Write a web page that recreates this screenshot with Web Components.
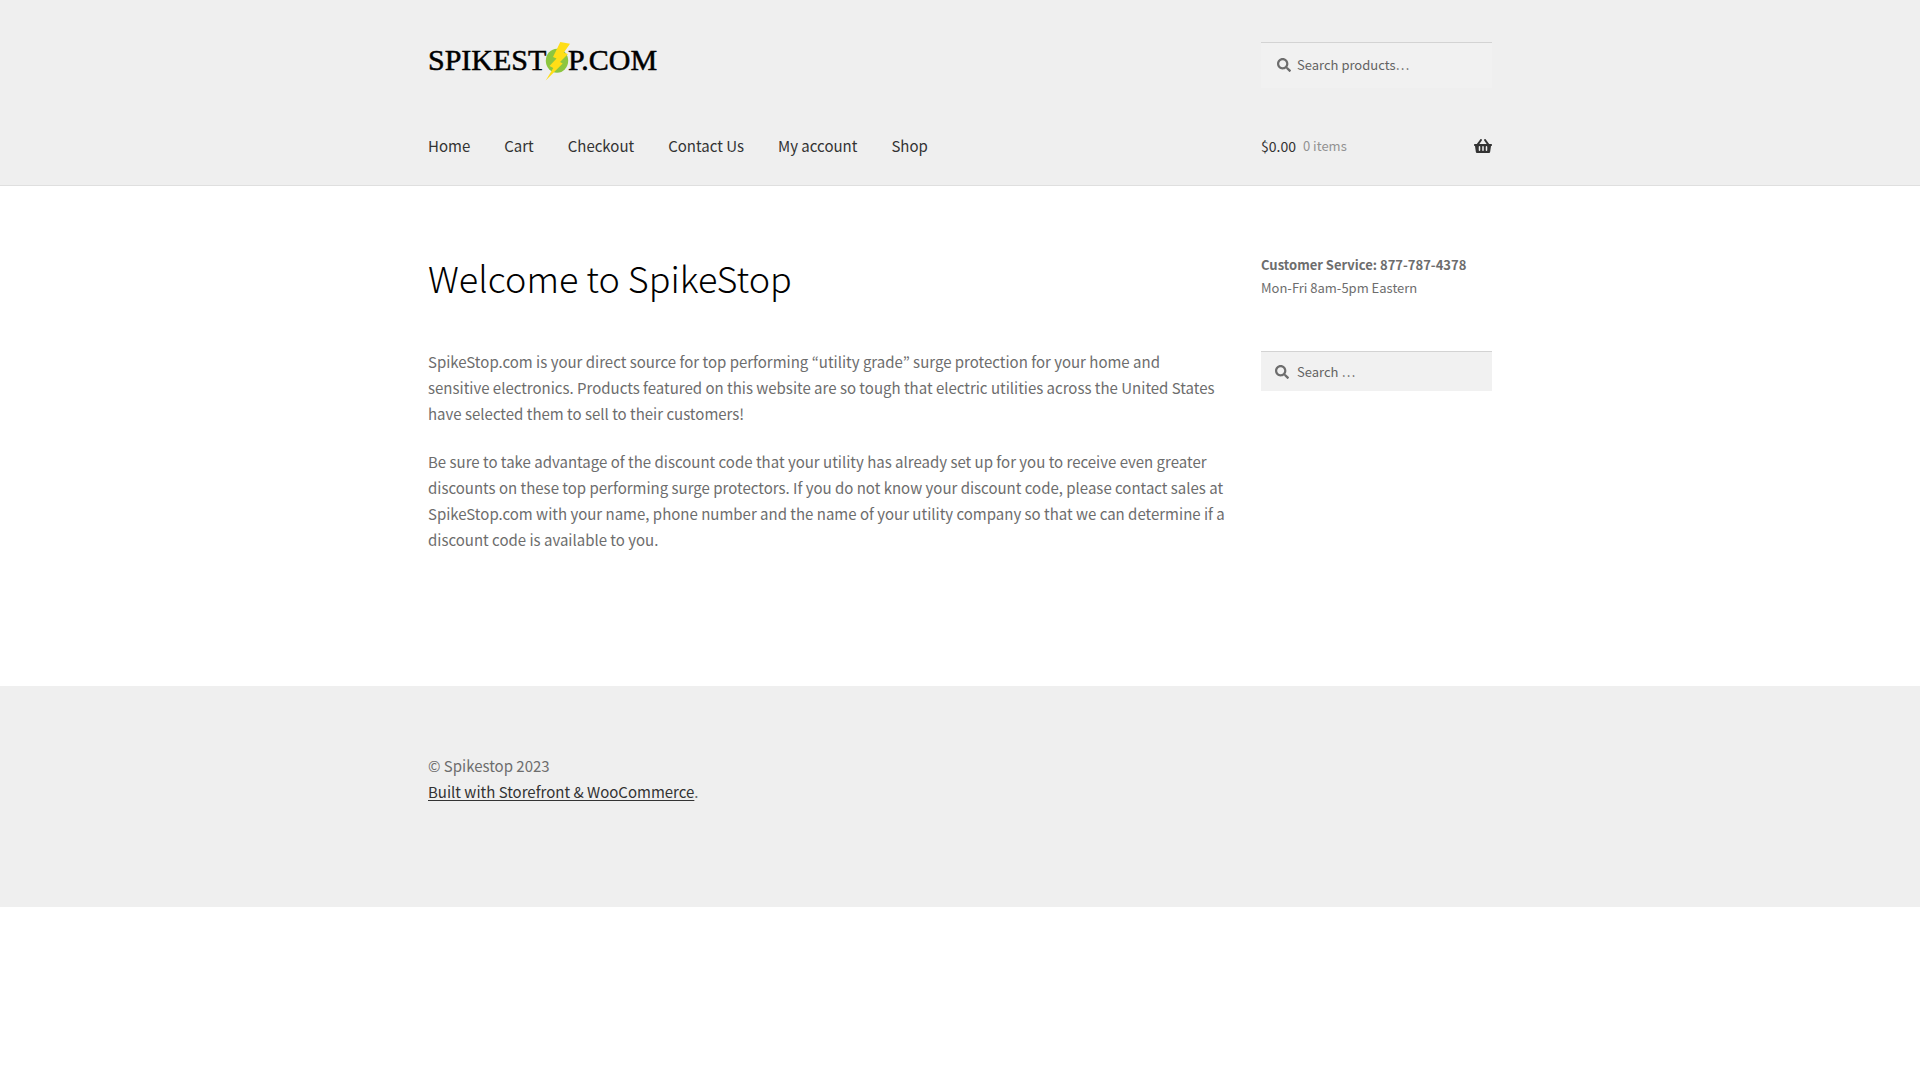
<!DOCTYPE html>
<html lang="en">
<head>
    <meta charset="UTF-8">
    <meta name="viewport" content="width=device-width, initial-scale=1.0">
    <title>SpikeStop</title>
    <style>
        body {
            margin: 0;
            background-color: #fff;
            color: #6d6d6d;
            font-family: "Noto Sans CJK KR", "Open Sans", sans-serif;
            font-size: 15px;
            line-height: 26px;
            --bar: #efefef;
            --dark: #333;
            --gutter: 32px;
            --side: 231px;
        }
        h1 {
            margin: 0 0 48px;
            color: #000;
            font-size: 36px;
            font-weight: 300;
            line-height: 48px;
        }
        p {
            margin: 0 0 22px;
        }
        .hours {
            margin: 0 0 52px;
            font-size: 13px;
            line-height: 23px;
        }
        .credit {
            margin: 0;
        }
        .credit a {
            color: #333;
            text-underline-offset: 2px;
        }
    </style>
</head>
<body>
    <site-header>
        <site-logo slot="logo"></site-logo>
        <search-box slot="search" label="Search products…" size="tall"></search-box>
        <site-nav slot="nav"></site-nav>
        <cart-summary slot="cart" amount="$0.00" count="0 items"></cart-summary>
    </site-header>

    <site-content>
        <h1>Welcome to SpikeStop</h1>
        <p>SpikeStop.com is your direct source for top performing “utility grade” surge protection for your home and<br> sensitive electronics. Products featured on this website are so tough that electric utilities across the United States have selected them to sell to their customers!</p>
        <p>Be sure to take advantage of the discount code that your utility has already set up for you to receive even greater discounts on these top performing surge protectors. If you do not know your discount code, please contact sales at SpikeStop.com with your name, phone number and the name of your utility company so that we can determine if a discount code is available to you.</p>
        <p class="hours" slot="side"><strong>Customer Service: 877-787-4378</strong><br>Mon-Fri 8am-5pm Eastern</p>
        <search-box slot="side" label="Search …"></search-box>
    </site-content>

    <site-footer>
        <p class="credit">© Spikestop 2023<br><a href="#">Built with Storefront &amp; WooCommerce</a>.</p>
    </site-footer>

    <script>
        class SiteHeader extends HTMLElement {
            constructor() {
                super();
                this.attachShadow({ mode: 'open' }).innerHTML = `
                    <style>
                        :host {
                            display: block;
                            padding-top: 42px;
                            background-color: var(--bar);
                            border-bottom: 1px solid #dfdfdf;
                        }
                        .inner {
                            display: grid;
                            grid-template-columns: 1fr var(--side);
                            column-gap: var(--gutter);
                            row-gap: 32px;
                            max-width: 1064px;
                            margin: 0 auto;
                        }
                    </style>
                    <header class="inner">
                        <slot name="logo"></slot>
                        <slot name="search"></slot>
                        <slot name="nav"></slot>
                        <slot name="cart"></slot>
                    </header>
                `;
            }
        }

        class SiteLogo extends HTMLElement {
            constructor() {
                super();
                this.attachShadow({ mode: 'open' }).innerHTML = `
                    <style>
                        :host {
                            display: block;
                        }
                        a {
                            display: block;
                            width: fit-content;
                        }
                        svg {
                            display: block;
                        }
                        text {
                            font: 30px "Liberation Serif", serif;
                            stroke: #000;
                            stroke-width: 0.5;
                        }
                    </style>
                    <a href="#" aria-label="SpikeStop.com">
                        <svg width="231" height="40" viewBox="0 0 231 40">
                            <ellipse cx="129" cy="18.700" rx="11.200" ry="12" fill="#8cc63f"/>
                            <text x="0" y="28">SPIKEST</text>
                            <text x="140" y="28">P.COM</text>
                            <path d="M132.300 0L142 1.700L135.700 10.700L140 12L132 20L134.700 21.500L117.700 38.500L125.300 26L121.500 24L128.500 16.500L125 15Z" fill="#ffde17"/>
                        </svg>
                    </a>
                `;
            }
        }

        class SiteNav extends HTMLElement {
            constructor() {
                super();
                this.attachShadow({ mode: 'open' });
                this.items = ['Home', 'Cart', 'Checkout', 'Contact Us', 'My account', 'Shop'];
            }

            connectedCallback() {
                this.shadowRoot.innerHTML = `
                    <style>
                        :host {
                            display: block;
                        }
                        nav {
                            display: flex;
                            gap: 34px;
                        }
                        a {
                            padding: 13px 0 26px;
                            color: var(--dark);
                            text-decoration: none;
                        }
                    </style>
                    <nav>${this.items.map(item => `<a href="#">${item}</a>`).join('')}</nav>
                `;
            }
        }

        class CartSummary extends HTMLElement {
            constructor() {
                super();
                this.attachShadow({ mode: 'open' });
            }

            connectedCallback() {
                this.shadowRoot.innerHTML = `
                    <style>
                        :host {
                            display: block;
                        }
                        a {
                            display: flex;
                            align-items: center;
                            gap: 7px;
                            padding: 13px 0 26px;
                            color: var(--dark);
                            text-decoration: none;
                        }
                        .amount {
                            font-size: 14px;
                        }
                        .count {
                            flex: 1;
                            color: #929292;
                            font-size: 13px;
                        }
                    </style>
                    <a href="#" title="View your shopping cart">
                        <span class="amount">${this.getAttribute('amount')}</span>
                        <span class="count">${this.getAttribute('count')}</span>
                        <svg width="18" height="16" viewBox="0 0 576 512" fill="currentColor" aria-hidden="true">
                            <path d="M576 216v16c0 13.255-10.745 24-24 24h-8l-26.113 182.788C514.509 462.435 494.257 480 470.370 480H105.630c-23.887 0-44.139-17.565-47.518-41.212L32 256h-8c-13.255 0-24-10.745-24-24v-16c0-13.255 10.745-24 24-24h67.341l106.780-146.821c10.395-14.292 30.407-17.453 44.701-7.058 14.293 10.395 17.453 30.408 7.058 44.701L170.477 192h235.046L326.120 82.821c-10.395-14.292-7.234-34.306 7.059-44.701 14.291-10.395 34.306-7.235 44.701 7.058L484.659 192H552c13.255 0 24 10.745 24 24zM312 392V280c0-13.255-10.745-24-24-24s-24 10.745-24 24v112c0 13.255 10.745 24 24 24s24-10.745 24-24zm112 0V280c0-13.255-10.745-24-24-24s-24 10.745-24 24v112c0 13.255 10.745 24 24 24s24-10.745 24-24zm-224 0V280c0-13.255-10.745-24-24-24s-24 10.745-24 24v112c0 13.255 10.745 24 24 24s24-10.745 24-24z"/>
                        </svg>
                    </a>
                `;
            }
        }

        class SearchBox extends HTMLElement {
            constructor() {
                super();
                this.attachShadow({ mode: 'open' });
            }

            connectedCallback() {
                const label = this.getAttribute('label');
                this.shadowRoot.innerHTML = `
                    <style>
                        :host {
                            display: block;
                        }
                        label {
                            display: flex;
                            align-items: center;
                            box-sizing: border-box;
                            height: 40px;
                            padding-left: 14px;
                            gap: 8px;
                            background-color: #f1f1f1;
                            border-top: 1px solid #d3d3d3;
                            color: #6d6d6d;
                        }
                        :host([size="tall"]) label {
                            height: 46px;
                            padding-left: 16px;
                            padding-bottom: 2px;
                            gap: 6px;
                        }
                        input {
                            flex: 1;
                            min-width: 0;
                            padding: 0;
                            border: 0;
                            outline: 0;
                            background: none;
                            color: #43454b;
                            font: inherit;
                            font-size: 13px;
                        }
                        input::placeholder {
                            color: #636363;
                            opacity: 1;
                        }
                    </style>
                    <label>
                        <svg width="14" height="14" viewBox="0 0 512 512" fill="currentColor" aria-hidden="true">
                            <path d="M505 442.700L405.300 343c-4.500-4.500-10.600-7-17-7H372c27.600-35.300 44-79.700 44-128C416 93.100 322.900 0 208 0S0 93.100 0 208s93.100 208 208 208c48.300 0 92.700-16.400 128-44v16.300c0 6.400 2.500 12.500 7 17l99.700 99.700c9.400 9.400 24.600 9.400 33.900 0l28.300-28.300c9.400-9.400 9.400-24.600.1-34zM208 336c-70.700 0-128-57.200-128-128 0-70.700 57.200-128 128-128 70.700 0 128 57.200 128 128 0 70.700-57.200 128-128 128z"/>
                        </svg>
                        <input type="search" placeholder="${label}" aria-label="${label}">
                    </label>
                `;
            }
        }

        class SiteContent extends HTMLElement {
            constructor() {
                super();
                this.attachShadow({ mode: 'open' }).innerHTML = `
                    <style>
                        :host {
                            display: grid;
                            grid-template-columns: 1fr var(--side);
                            column-gap: var(--gutter);
                            max-width: 1064px;
                            margin: 0 auto;
                            padding: 67px 0 111px;
                        }
                    </style>
                    <main><slot></slot></main>
                    <aside><slot name="side"></slot></aside>
                `;
            }
        }

        class SiteFooter extends HTMLElement {
            constructor() {
                super();
                this.attachShadow({ mode: 'open' }).innerHTML = `
                    <style>
                        :host {
                            display: block;
                            padding: 67px 0 102px;
                            background-color: var(--bar);
                        }
                        footer {
                            max-width: 1064px;
                            margin: 0 auto;
                        }
                    </style>
                    <footer><slot></slot></footer>
                `;
            }
        }

        customElements.define('site-header', SiteHeader);
        customElements.define('site-logo', SiteLogo);
        customElements.define('site-nav', SiteNav);
        customElements.define('cart-summary', CartSummary);
        customElements.define('search-box', SearchBox);
        customElements.define('site-content', SiteContent);
        customElements.define('site-footer', SiteFooter);
    </script>
</body>
</html>
